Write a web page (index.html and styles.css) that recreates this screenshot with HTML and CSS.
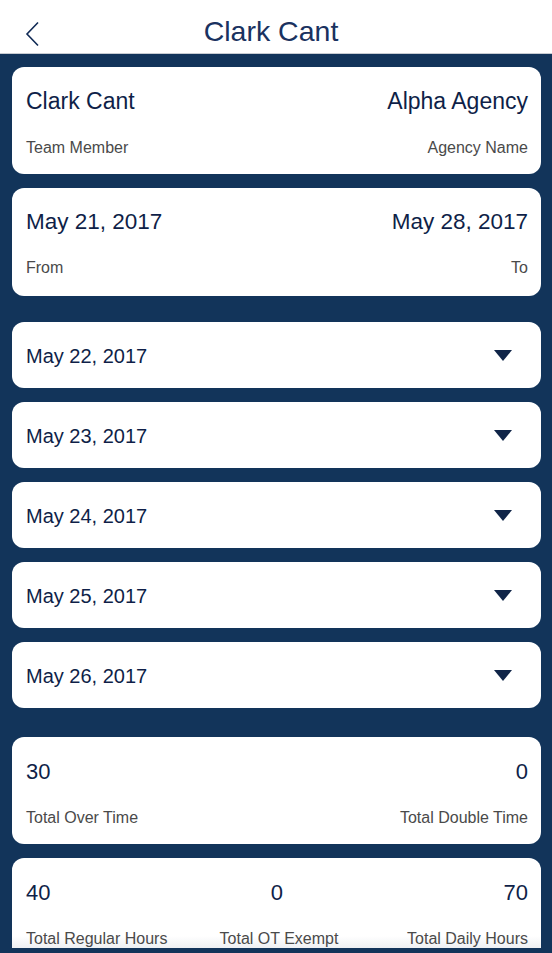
FILE: index.html
```html
<!DOCTYPE html>
<html>
<head>
<meta charset="utf-8">
<link rel="stylesheet" href="styles.css">
</head>
<body>
<header class="topbar">
  <svg class="back" width="16" height="26" viewBox="0 0 16 26"><path d="M13 1.5 L2 13 L13 24.5" fill="none" stroke="#102a55" stroke-width="1.6"/></svg>
  <h1 class="title">Clark Cant</h1>
</header>
<main class="content">
  <section class="card">
    <div class="row values big"><span>Clark Cant</span><span>Alpha Agency</span></div>
    <div class="row labels"><span>Team Member</span><span>Agency Name</span></div>
  </section>
  <section class="card range">
    <div class="row values"><span>May 21, 2017</span><span>May 28, 2017</span></div>
    <div class="row labels"><span>From</span><span>To</span></div>
  </section>

  <div class="days">
    <div class="day"><span>May 22, 2017</span><i class="caret"></i></div>
    <div class="day"><span>May 23, 2017</span><i class="caret"></i></div>
    <div class="day"><span>May 24, 2017</span><i class="caret"></i></div>
    <div class="day"><span>May 25, 2017</span><i class="caret"></i></div>
    <div class="day"><span>May 26, 2017</span><i class="caret"></i></div>
  </div>

  <section class="card totals">
    <div class="row values"><span>30</span><span>0</span></div>
    <div class="row labels"><span>Total Over Time</span><span>Total Double Time</span></div>
  </section>
  <section class="card totals three">
    <div class="grid3 values"><span>40</span><span class="mid">0</span><span class="end">70</span></div>
    <div class="grid3 labels"><span>Total Regular Hours</span><span class="mid">Total OT Exempt</span><span class="end">Total Daily Hours</span></div>
  </section>
</main>
</body>
</html>
```

FILE: styles.css
```css
* { box-sizing: border-box; }
html, body { margin: 0; padding: 0; }
body {
  width: 552px;
  height: 953px;
  overflow: hidden;
  background: #12345a;
  font-family: "Liberation Sans", Arial, sans-serif;
  color: #0f1f48;
}
.topbar {
  height: 54px;
  background: #fff;
  border-bottom: 1px solid #c8ccd2;
  display: flex;
  align-items: center;
  justify-content: center;
  position: relative;
}
.back {
  position: absolute;
  left: 25px;
  top: 21px;
}
.title {
  margin: 0;
  font-weight: normal;
  font-size: 28.5px;
  line-height: 32px;
  color: #1a3260;
  padding-top: 8px;
  padding-right: 10px;
}
.content {
  height: 894px;
  overflow: hidden;
  padding: 13px 11px 0 12px;
  display: flex;
  flex-direction: column;
}
.card {
  background: #fff;
  border-radius: 12px;
  padding: 20px 13px 17px 14px;
  margin-bottom: 14px;
  flex-shrink: 0;
}
.row {
  display: flex;
  justify-content: space-between;
}
.values {
  font-size: 22.5px;
  line-height: 28px;
  color: #0f1f48;
}
.values.big { font-size: 23px; }
.labels {
  margin-top: 24px;
  font-size: 16px;
  line-height: 18px;
  color: #4a4a4a;
}
.range { padding-bottom: 19px; }
.range .labels { margin-top: 23px; }
.days {
  margin-top: 12px;
  margin-bottom: 29px;
  display: flex;
  flex-direction: column;
  gap: 14px;
}
.day {
  height: 66px;
  background: #fff;
  border-radius: 12px;
  display: flex;
  align-items: center;
  justify-content: space-between;
  padding: 3px 29px 0 14px;
  font-size: 20px;
  color: #0f1f48;
}
.caret {
  width: 0;
  height: 0;
  border-left: 9.5px solid transparent;
  border-right: 9.5px solid transparent;
  border-top: 11px solid #102548;
  margin-top: -2px;
}
.totals {
  padding-top: 21px;
}
.totals .values { font-size: 22px; }
.totals .labels {
  margin-top: 23px;
}
.three {
  background: linear-gradient(#fff 0, #fff 78px, #eef0f3 90px);
}
.grid3 {
  display: grid;
  grid-template-columns: 1fr 1fr 1fr;
}
.grid3 .mid { text-align: center; }
.grid3 .end { text-align: right; }
.three .labels .mid { padding-left: 4px; }
```
